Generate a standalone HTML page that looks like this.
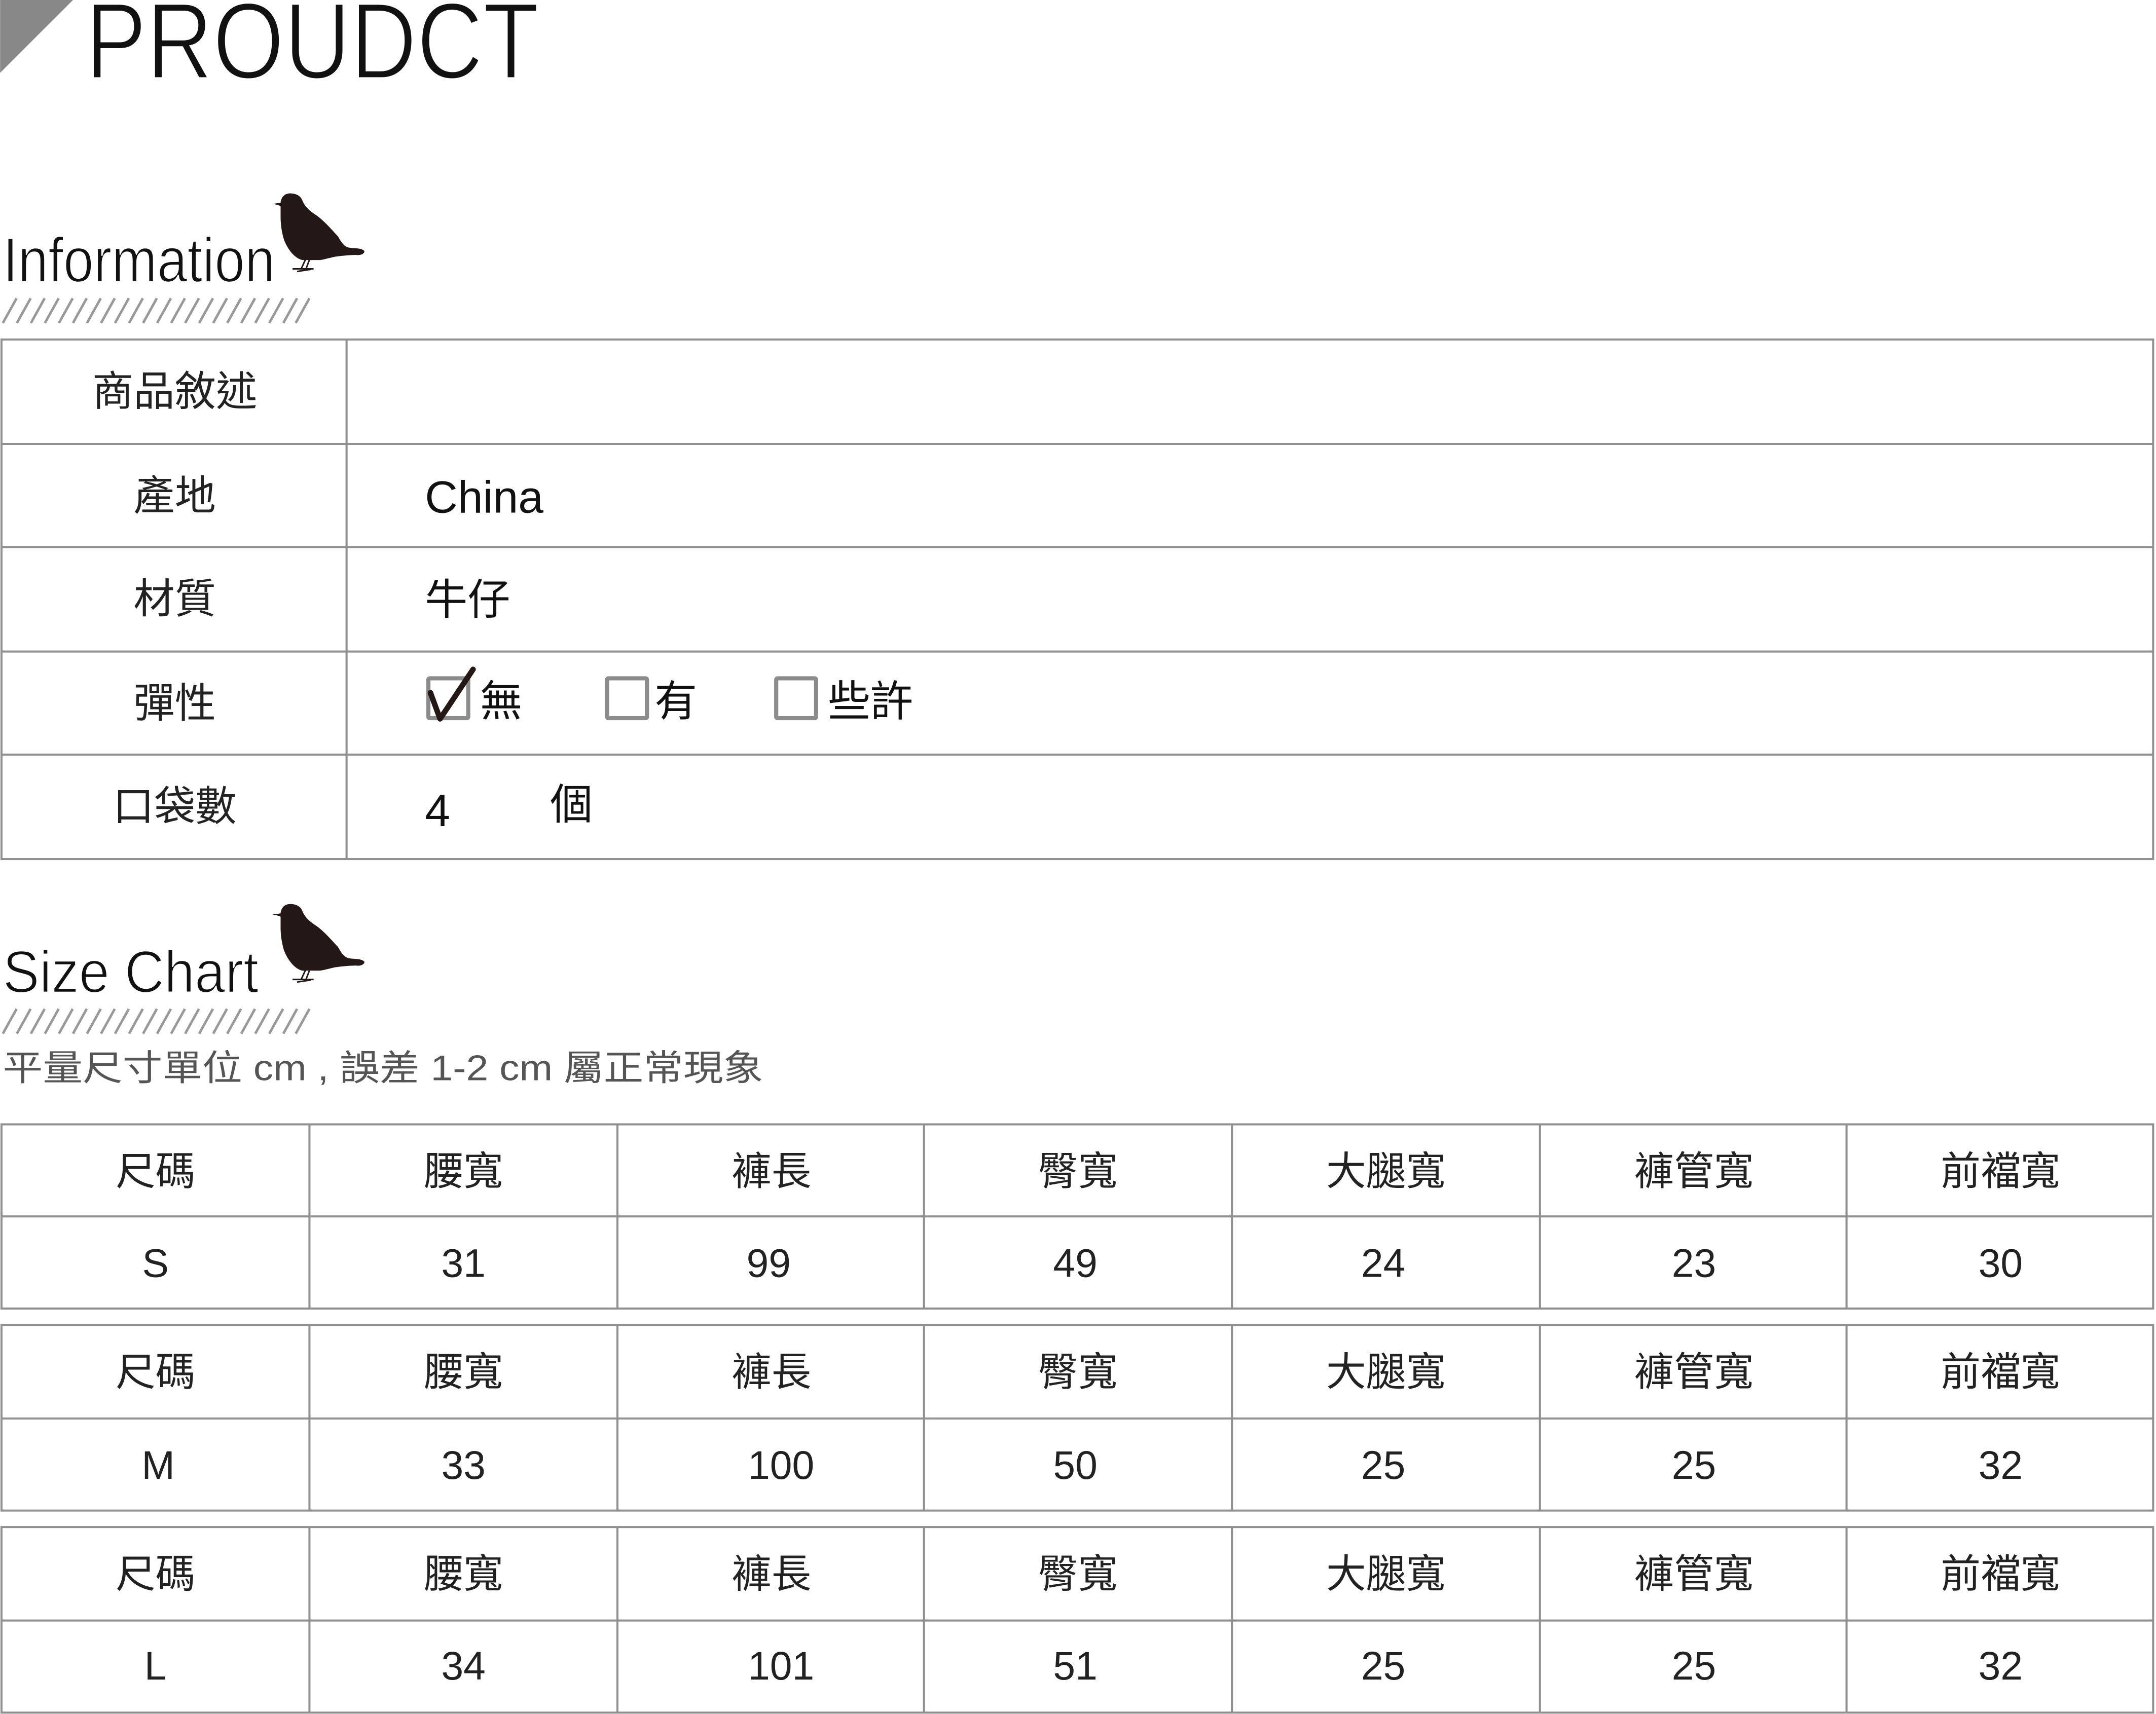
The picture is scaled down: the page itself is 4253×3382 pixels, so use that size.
<!DOCTYPE html>
<html><head><meta charset="utf-8"><style>
html,body{margin:0;padding:0;background:#fff;}
svg{display:block;}
text{font-family:"Liberation Sans","Noto Sans CJK TC",sans-serif;}
</style></head><body>
<svg width="4253" height="3382" viewBox="0 0 1568 1247" xmlns="http://www.w3.org/2000/svg">
<defs>
<g id="bird">
<path d="M197.9,148.4 L204,147.5 C204.5,142.5 208,140.5 211.4,140.7 C216,140.8 219,143 220,146.2 C222,151 226,154 231,157.3 C237,162 242,168 245.8,172 C248,176 250,179 253,180 C257,181 262,180 264.9,182.5 C265.5,184.5 262,186 259.3,185.5 C254,185.5 249,186 243.4,186.8 C238,188 235,189 232.3,189.2 L220,189.2 C214,188 209,181 206.5,174.5 C204.5,168 204,162 204,157.3 L204,149.9 C202,149 200,148.6 197.9,148.4 Z" fill="#231815"/>
<path d="M222,189 L219,195.6 M225,189 L222.5,195.6 M212.7,195.6 L228,195.6 M216,197.5 L226,196" stroke="#231815" stroke-width="1.1" fill="none"/>
</g>
<g id="hatch" stroke="#999" stroke-width="1.8">
<path d="M12,217L2,235M22.2,217L12.2,235M32.4,217L22.4,235M42.6,217L32.6,235M52.8,217L42.8,235M63,217L53,235M73.2,217L63.2,235M83.4,217L73.4,235M93.6,217L83.6,235M103.8,217L93.8,235M114,217L104,235M124.2,217L114.2,235M134.4,217L124.4,235M144.6,217L134.6,235M154.8,217L144.8,235M165,217L155,235M175.2,217L165.2,235M185.4,217L175.4,235M195.6,217L185.6,235M205.8,217L195.8,235M216,217L206,235M225,217L215,235"/>
</g>
</defs>
<rect width="1568" height="1247" fill="#fff"/>
<polygon points="0,0 53,0 0,53" fill="#888"/>
<text x="62" y="57" font-size="79" textLength="330" lengthAdjust="spacingAndGlyphs" fill="#111" stroke="#fff" stroke-width="1.6">PROUDCT</text>

<text x="2" y="205" font-size="46" textLength="198" lengthAdjust="spacingAndGlyphs" fill="#111" stroke="#fff" stroke-width="0.9">Information</text>
<use href="#bird"/>
<use href="#hatch"/>

<g stroke="#909090" stroke-width="1.5" fill="none">
<rect x="1" y="247" width="1565" height="378"/>
<path d="M1,323H1566M1,398H1566M1,474H1566M1,549H1566M252,247V625"/>
</g>
<g font-size="30" fill="#222" text-anchor="middle">
<text x="127" y="295">商品敘述</text>
<text x="127" y="371">產地</text>
<text x="127" y="446">材質</text>
<text x="127" y="522">彈性</text>
<text x="127" y="597">口袋數</text>
</g>
<g font-size="31" fill="#111">
<text x="309" y="373" font-size="33">China</text>
<text x="309" y="447">牛仔</text>
<text x="349" y="521">無</text>
<text x="476" y="521">有</text>
<text x="602" y="521">些許</text>
<text x="309" y="601" font-size="33">4</text>
<text x="400" y="596">個</text>
</g>
<g stroke="#8c8c8c" stroke-width="3" fill="none">
<rect x="311.5" y="493.5" width="29" height="29" rx="1"/>
<rect x="441.5" y="493.5" width="29" height="29" rx="1"/>
<rect x="564.5" y="493.5" width="29" height="29" rx="1"/>
</g>
<path d="M313,504 L320,523 L344,487" stroke="#231815" stroke-width="4" fill="none" stroke-linecap="round" stroke-linejoin="round"/>

<text x="2" y="722" font-size="43" textLength="186" lengthAdjust="spacingAndGlyphs" fill="#111" stroke="#fff" stroke-width="0.9">Size Chart</text>
<use href="#bird" y="517"/>
<use href="#hatch" y="517"/>
<text x="2" y="786" font-size="26" textLength="553" lengthAdjust="spacingAndGlyphs" fill="#555">平量尺寸單位 cm , 誤差 1-2 cm 屬正常現象</text>

<g stroke="#909090" stroke-width="1.5" fill="none">
<rect x="1" y="818" width="1565" height="134"/><path d="M1,885H1566"/>
<rect x="1" y="964" width="1565" height="135"/><path d="M1,1032H1566"/>
<rect x="1" y="1111" width="1565" height="135"/><path d="M1,1179H1566"/>
<path d="M225,818V952M449,818V952M672,818V952M896,818V952M1120,818V952M1343,818V952"/>
<path d="M225,964V1099M449,964V1099M672,964V1099M896,964V1099M1120,964V1099M1343,964V1099"/>
<path d="M225,1111V1246M449,1111V1246M672,1111V1246M896,1111V1246M1120,1111V1246M1343,1111V1246"/>
</g>
<g font-size="29" fill="#222" text-anchor="middle">
<text x="113" y="862">尺碼</text><text x="337" y="862">腰寬</text><text x="561" y="862">褲長</text><text x="784" y="862">臀寬</text><text x="1008" y="862">大腿寬</text><text x="1232" y="862">褲管寬</text><text x="1455" y="862">前襠寬</text>
<text x="113" y="929">S</text><text x="337" y="929">31</text><text x="559" y="929">99</text><text x="782" y="929">49</text><text x="1006" y="929">24</text><text x="1232" y="929">23</text><text x="1455" y="929">30</text>
<text x="113" y="1008">尺碼</text><text x="337" y="1008">腰寬</text><text x="561" y="1008">褲長</text><text x="784" y="1008">臀寬</text><text x="1008" y="1008">大腿寬</text><text x="1232" y="1008">褲管寬</text><text x="1455" y="1008">前襠寬</text>
<text x="115" y="1076">M</text><text x="337" y="1076">33</text><text x="568" y="1076">100</text><text x="782" y="1076">50</text><text x="1006" y="1076">25</text><text x="1232" y="1076">25</text><text x="1455" y="1076">32</text>
<text x="113" y="1155">尺碼</text><text x="337" y="1155">腰寬</text><text x="561" y="1155">褲長</text><text x="784" y="1155">臀寬</text><text x="1008" y="1155">大腿寬</text><text x="1232" y="1155">褲管寬</text><text x="1455" y="1155">前襠寬</text>
<text x="113" y="1222">L</text><text x="337" y="1222">34</text><text x="568" y="1222">101</text><text x="782" y="1222">51</text><text x="1006" y="1222">25</text><text x="1232" y="1222">25</text><text x="1455" y="1222">32</text>
</g>
</svg>
</body></html>
